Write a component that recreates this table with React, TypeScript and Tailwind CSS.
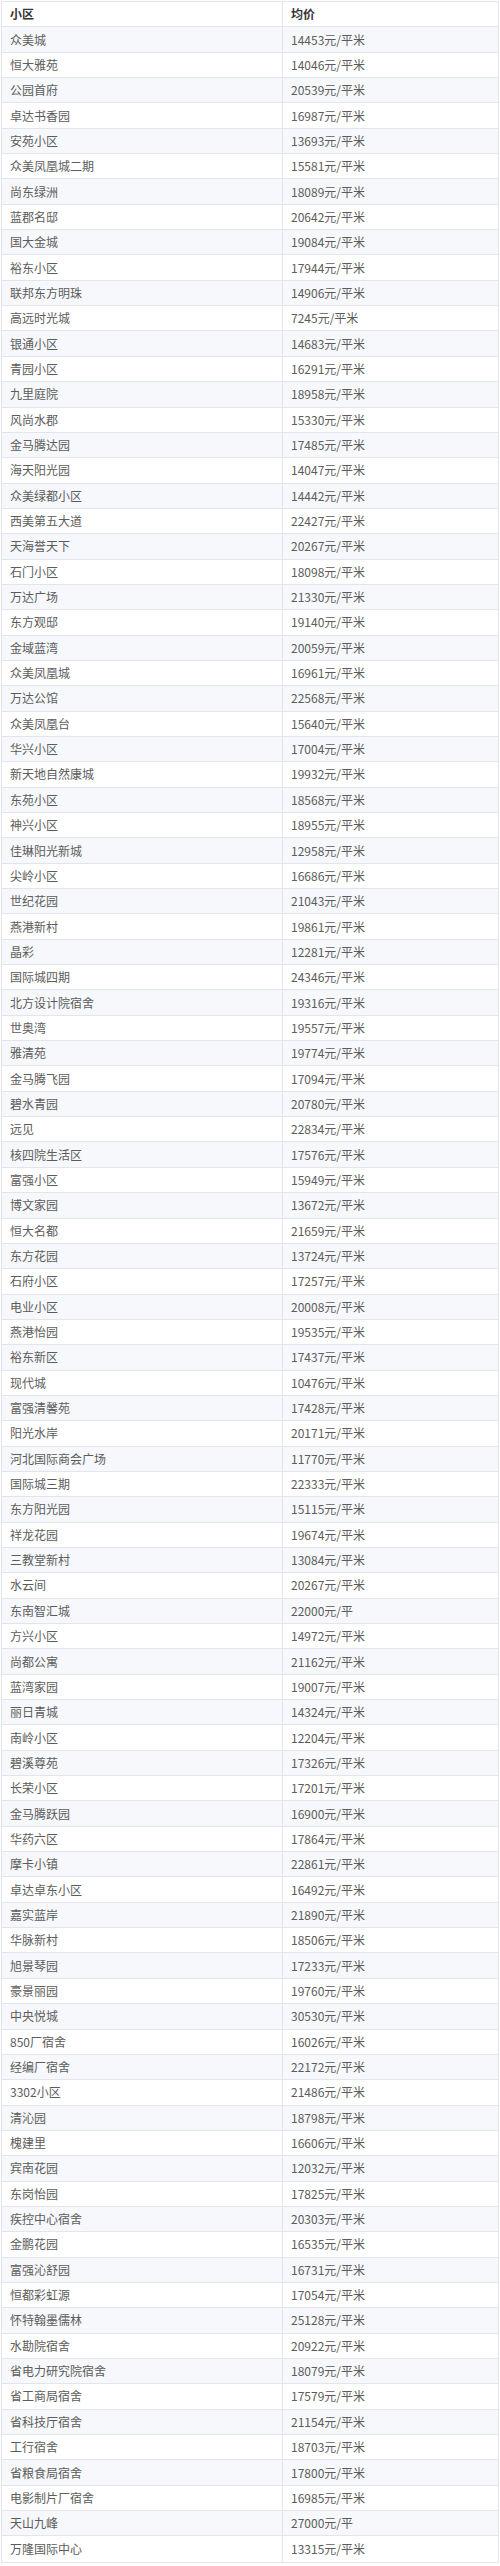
import React from "react";

const rows: [string, string][] = [
  ["众美城", "14453元/平米"],
  ["恒大雅苑", "14046元/平米"],
  ["公园首府", "20539元/平米"],
  ["卓达书香园", "16987元/平米"],
  ["安苑小区", "13693元/平米"],
  ["众美凤凰城二期", "15581元/平米"],
  ["尚东绿洲", "18089元/平米"],
  ["蓝郡名邸", "20642元/平米"],
  ["国大金城", "19084元/平米"],
  ["裕东小区", "17944元/平米"],
  ["联邦东方明珠", "14906元/平米"],
  ["高远时光城", "7245元/平米"],
  ["银通小区", "14683元/平米"],
  ["青园小区", "16291元/平米"],
  ["九里庭院", "18958元/平米"],
  ["风尚水郡", "15330元/平米"],
  ["金马腾达园", "17485元/平米"],
  ["海天阳光园", "14047元/平米"],
  ["众美绿都小区", "14442元/平米"],
  ["西美第五大道", "22427元/平米"],
  ["天海誉天下", "20267元/平米"],
  ["石门小区", "18098元/平米"],
  ["万达广场", "21330元/平米"],
  ["东方观邸", "19140元/平米"],
  ["金域蓝湾", "20059元/平米"],
  ["众美凤凰城", "16961元/平米"],
  ["万达公馆", "22568元/平米"],
  ["众美凤凰台", "15640元/平米"],
  ["华兴小区", "17004元/平米"],
  ["新天地自然康城", "19932元/平米"],
  ["东苑小区", "18568元/平米"],
  ["神兴小区", "18955元/平米"],
  ["佳琳阳光新城", "12958元/平米"],
  ["尖岭小区", "16686元/平米"],
  ["世纪花园", "21043元/平米"],
  ["燕港新村", "19861元/平米"],
  ["晶彩", "12281元/平米"],
  ["国际城四期", "24346元/平米"],
  ["北方设计院宿舍", "19316元/平米"],
  ["世奥湾", "19557元/平米"],
  ["雅清苑", "19774元/平米"],
  ["金马腾飞园", "17094元/平米"],
  ["碧水青园", "20780元/平米"],
  ["远见", "22834元/平米"],
  ["核四院生活区", "17576元/平米"],
  ["富强小区", "15949元/平米"],
  ["博文家园", "13672元/平米"],
  ["恒大名都", "21659元/平米"],
  ["东方花园", "13724元/平米"],
  ["石府小区", "17257元/平米"],
  ["电业小区", "20008元/平米"],
  ["燕港怡园", "19535元/平米"],
  ["裕东新区", "17437元/平米"],
  ["现代城", "10476元/平米"],
  ["富强清馨苑", "17428元/平米"],
  ["阳光水岸", "20171元/平米"],
  ["河北国际商会广场", "11770元/平米"],
  ["国际城三期", "22333元/平米"],
  ["东方阳光园", "15115元/平米"],
  ["祥龙花园", "19674元/平米"],
  ["三教堂新村", "13084元/平米"],
  ["水云间", "20267元/平米"],
  ["东南智汇城", "22000元/平"],
  ["方兴小区", "14972元/平米"],
  ["尚都公寓", "21162元/平米"],
  ["蓝湾家园", "19007元/平米"],
  ["丽日青城", "14324元/平米"],
  ["南岭小区", "12204元/平米"],
  ["碧溪尊苑", "17326元/平米"],
  ["长荣小区", "17201元/平米"],
  ["金马腾跃园", "16900元/平米"],
  ["华药六区", "17864元/平米"],
  ["摩卡小镇", "22861元/平米"],
  ["卓达卓东小区", "16492元/平米"],
  ["嘉实蓝岸", "21890元/平米"],
  ["华脉新村", "18506元/平米"],
  ["旭景琴园", "17233元/平米"],
  ["豪景丽园", "19760元/平米"],
  ["中央悦城", "30530元/平米"],
  ["850厂宿舍", "16026元/平米"],
  ["经编厂宿舍", "22172元/平米"],
  ["3302小区", "21486元/平米"],
  ["清沁园", "18798元/平米"],
  ["槐建里", "16606元/平米"],
  ["宾南花园", "12032元/平米"],
  ["东岗怡园", "17825元/平米"],
  ["疾控中心宿舍", "20303元/平米"],
  ["金鹏花园", "16535元/平米"],
  ["富强沁舒园", "16731元/平米"],
  ["恒都彩虹源", "17054元/平米"],
  ["怀特翰墨儒林", "25128元/平米"],
  ["水勘院宿舍", "20922元/平米"],
  ["省电力研究院宿舍", "18079元/平米"],
  ["省工商局宿舍", "17579元/平米"],
  ["省科技厅宿舍", "21154元/平米"],
  ["工行宿舍", "18703元/平米"],
  ["省粮食局宿舍", "17800元/平米"],
  ["电影制片厂宿舍", "16985元/平米"],
  ["天山九峰", "27000元/平"],
  ["万隆国际中心", "13315元/平米"],
];

export default function App() {
  return (
    <div className="w-[500px] bg-white pt-px pl-px font-['Noto_Sans_CJK_SC','Noto_Sans',sans-serif] text-[12px] leading-none">
      <div className="w-[498px] border border-[#e2e6ec]">
        {/* header */}
        <div className="grid h-[25.35px] grid-cols-[281px_1fr] border-b border-[#e2e6ec] bg-white font-bold text-[#333]">
          <div className="flex items-center border-r border-[#e2e6ec] px-2">小区</div>
          <div className="flex items-center px-2">均价</div>
        </div>

        {rows.map(([name, price], i) => (
          <div
            key={i}
            className={`grid h-[25.35px] grid-cols-[281px_1fr] text-[#5c5c5c] ${
              i % 2 === 0 ? "bg-[#f6f8fb]" : "bg-white"
            } ${i < rows.length - 1 ? "border-b border-[#e2e6ec]" : ""}`}
          >
            <div className="flex items-center border-r border-[#e2e6ec] px-2">{name}</div>
            <div className="flex items-center px-2">{price}</div>
          </div>
        ))}
      </div>
    </div>
  );
}
